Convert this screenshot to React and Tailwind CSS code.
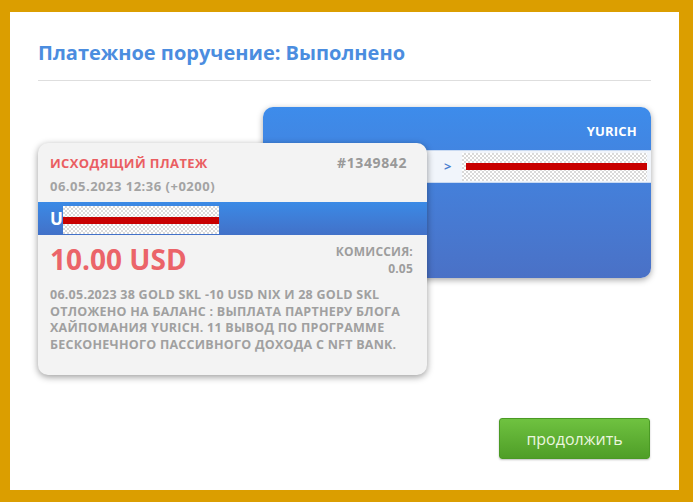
export default function App() {
  const checker = 'bg-[repeating-conic-gradient(#d9d9d9_0_25%,#ffffff_0_50%)] bg-[length:4px_4px]'

  return (
    <div className="w-[693px] h-[502px] bg-[#db9e00] pt-[12px] pl-[10px] pr-[14px] pb-[12px]" style={{ fontFamily: '"Open Sans", "Liberation Sans", Arial, sans-serif' }}>
      <div className="h-full bg-white px-[28px] pt-[27px] flex flex-col">
        {/* Title */}
        <h1 className="text-[20px] leading-[28px] font-bold text-[#4b8ddf]">
          Платежное поручение: Выполнено
        </h1>
        <div className="mt-[13px] border-t border-[#dedede]" />

        {/* Cards */}
        <div className="relative mt-[26px] h-[268px]">
          {/* Recipient card (back) */}
          <div className="ml-[225px] h-[171px] rounded-[10px] bg-gradient-to-b from-[#3d8ceb] to-[#4a71c6] shadow-[0_2px_6px_rgba(0,0,0,0.35)] overflow-hidden">
            <div className="h-[43px] pr-[14px] pt-[15px] text-right text-[13px] leading-[18px] font-bold text-white tracking-[0.2px]">YURICH</div>
            <div className="h-[33px] bg-[#f1f5fb] border-y border-[#c9daf2] flex items-center pl-[181px] pr-[4px]">
              <span className="text-[13px] font-bold text-[#4a7fd0] mr-[11px]">&gt;</span>
              <div className={`flex-1 h-[28px] flex items-center ${checker}`}>
                <div className="w-full h-[7px] ml-[4px] bg-[#c80000]" />
              </div>
            </div>
          </div>

          {/* Outgoing payment card (front) */}
          <div className="absolute left-0 top-[36px] w-[389px] h-[232px] rounded-[10px] bg-[#f3f3f3] shadow-[0_2px_7px_rgba(0,0,0,0.4)] overflow-hidden">
            <div className="h-[59px] pl-[12px] pr-[20px] pt-[11px]">
              <div className="flex justify-between items-baseline text-[13px] leading-[18px] font-bold">
                <span className="text-[#ea5e62] tracking-[0.4px]">ИСХОДЯЩИЙ ПЛАТЕЖ</span>
                <span className="text-[#999999] text-[14px] tracking-[0.6px]">#1349842</span>
              </div>
              <div className="mt-[5px] text-[13px] leading-[18px] font-bold text-[#a3a3a3] tracking-[0.5px]">06.05.2023 12:36 (+0200)</div>
            </div>
            <div className="h-[33px] bg-gradient-to-b from-[#3a8ae6] to-[#4271c8] flex items-center pl-[12px]">
              <span className="text-[17px] font-bold text-white">U</span>
              <div className={`w-[156px] h-[28px] mt-[3px] pt-[11px] ${checker}`}>
                <div className="h-[7px] bg-[#c80000]" />
              </div>
            </div>
            <div className="flex justify-between pl-[12px] pr-[14px] pt-[8px]">
              <span className="text-[28px] leading-[32px] font-bold text-[#eb6469]">10.00 USD</span>
              <div className="text-right text-[12px] leading-[17px] font-bold text-[#9d9d9d] tracking-[0.2px]">
                <div>КОМИССИЯ:</div>
                <div>0.05</div>
              </div>
            </div>
            <p className="mt-[10px] pl-[12px] pr-[4px] text-[12.5px] leading-[16.7px] font-bold uppercase text-[#a0a0a0] tracking-[0.25px] whitespace-nowrap">
              06.05.2023 38 GOLD SKL -10 USD NIX И 28 GOLD SKL<br />
              отложено на баланс : Выплата партнеру блога<br />
              Хайпомания Yurich. 11 вывод по программе<br />
              бесконечного пассивного дохода с NFT Bank.
            </p>
          </div>
        </div>

        {/* Button */}
        <div className="mt-[43px] flex justify-end pr-[1px]">
          <button className="w-[151px] h-[41px] rounded-[3px] bg-gradient-to-b from-[#6fc240] to-[#4f9e27] border border-[#4a9a24] shadow-[0_1px_2px_rgba(0,0,0,0.25)] text-[16px] text-[#eaf6df]">
            продолжить
          </button>
        </div>
      </div>
    </div>
  )
}
